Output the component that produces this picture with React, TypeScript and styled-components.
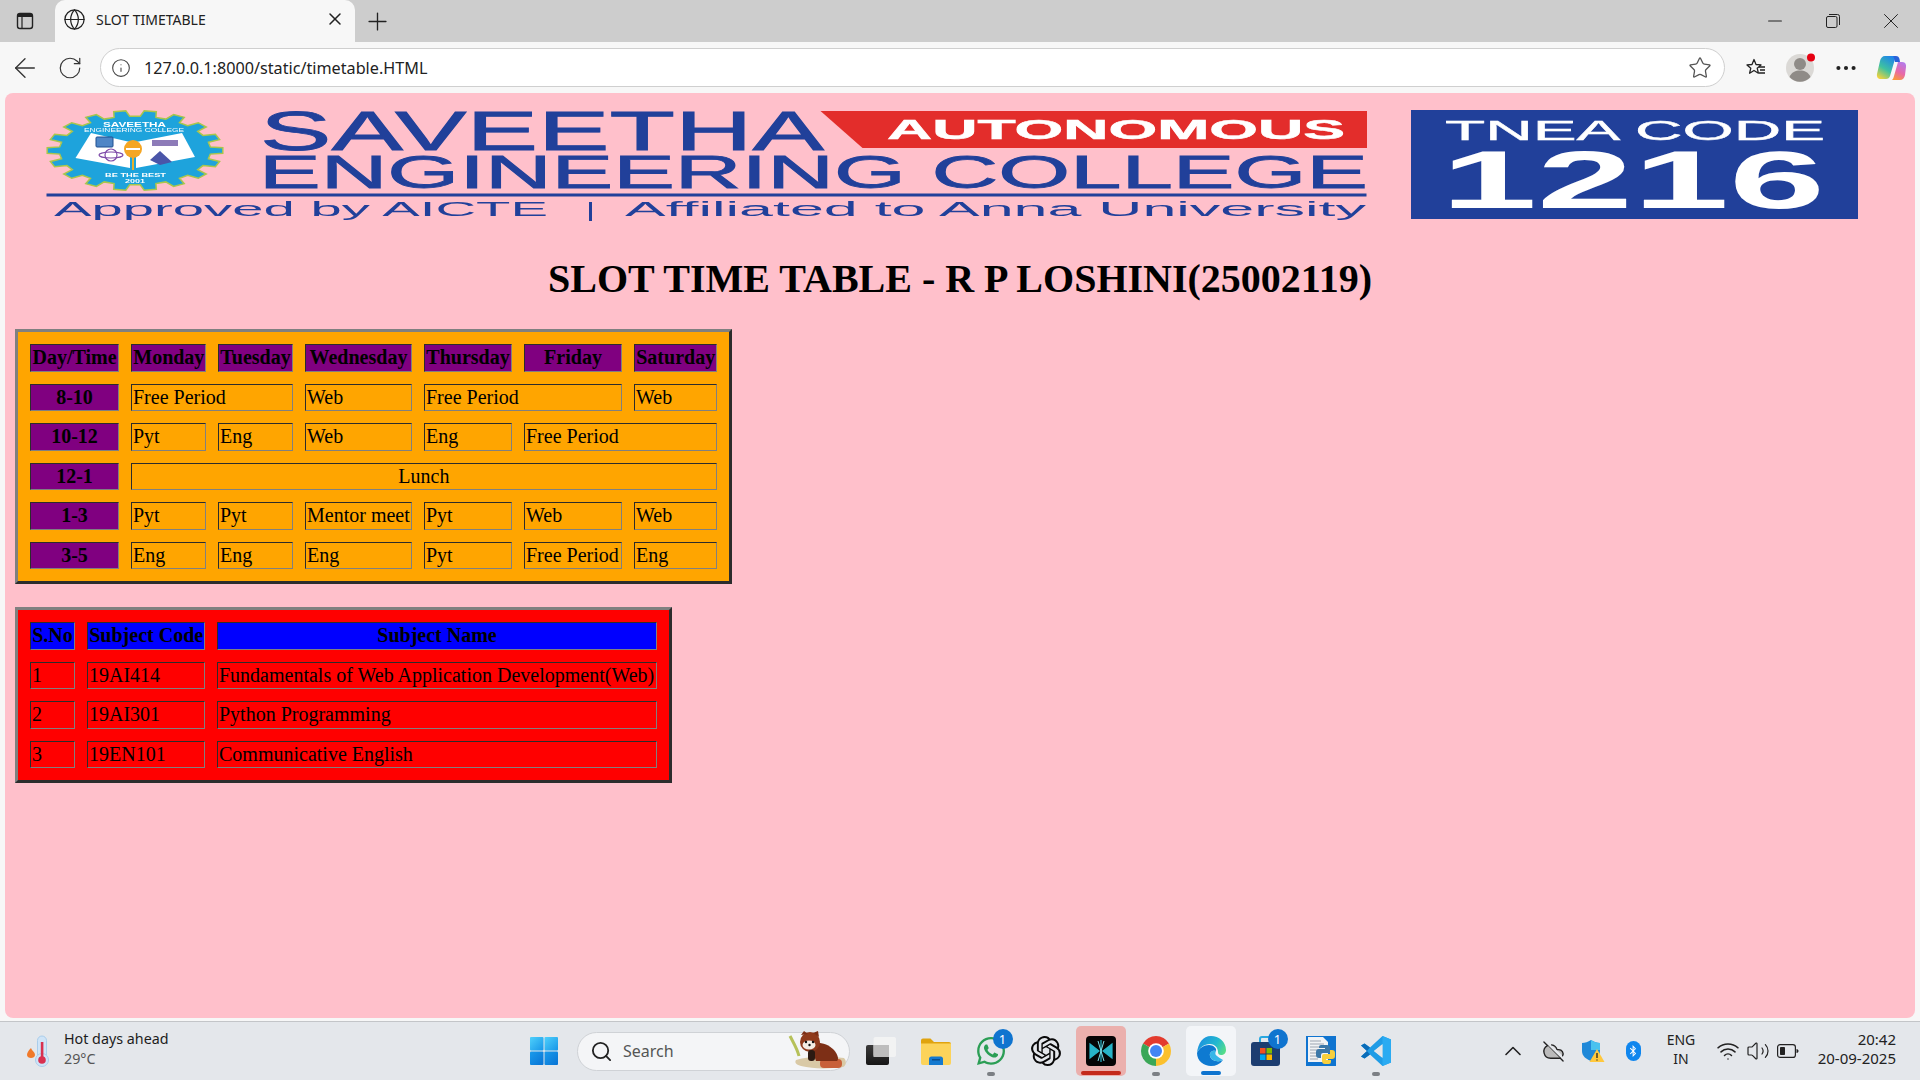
import React from 'react'
import styled, { createGlobalStyle } from 'styled-components'
import {
  ArrowLeft, ChevronUp, CloudOff, Ellipsis, Globe, Info, Minus, Plus, RotateCw, Search, Star, Volume2, Wifi, X,
} from 'lucide-react'
import { FaBluetoothB, FaWhatsapp } from 'react-icons/fa'
import { SiOpenai } from 'react-icons/si'

const UI_FONT = '"Noto Sans", "Open Sans", sans-serif'
const COLLEGE_BLUE = '#21409a'

const GlobalStyle = createGlobalStyle`
  html, body { margin: 0; padding: 0; height: 100%; overflow: hidden; }
  body { background: #f7f7f7; font-family: "Liberation Serif", serif; }
`

const week = ['Monday', 'Tuesday', 'Wednesday', 'Thursday', 'Friday', 'Saturday']

type Slot = { text: string; span?: number; center?: boolean }

const timetable: { time: string; slots: Slot[] }[] = [
  { time: '8-10', slots: [{ text: 'Free Period', span: 2 }, { text: 'Web' }, { text: 'Free Period', span: 2 }, { text: 'Web' }] },
  { time: '10-12', slots: [{ text: 'Pyt' }, { text: 'Eng' }, { text: 'Web' }, { text: 'Eng' }, { text: 'Free Period', span: 2 }] },
  { time: '12-1', slots: [{ text: 'Lunch', span: 6, center: true }] },
  { time: '1-3', slots: [{ text: 'Pyt' }, { text: 'Pyt' }, { text: 'Mentor meet' }, { text: 'Pyt' }, { text: 'Web' }, { text: 'Web' }] },
  { time: '3-5', slots: [{ text: 'Eng' }, { text: 'Eng' }, { text: 'Eng' }, { text: 'Pyt' }, { text: 'Free Period' }, { text: 'Eng' }] },
]

const subjects = [
  ['1', '19AI414', 'Fundamentals of Web Application Development(Web)'],
  ['2', '19AI301', 'Python Programming'],
  ['3', '19EN101', 'Communicative English'],
]

const gearPoints = (() => {
  const teeth = 18
  const points: string[] = []
  for (let i = 0; i < teeth; i++) {
    const step = (Math.PI * 2) / teeth
    const a = i * step
    const rows: [number, number][] = [[-0.3, 0.86], [-0.2, 1], [0.2, 1], [0.3, 0.86]]
    rows.forEach(([offset, r]) => {
      const angle = a + offset * step
      points.push(`${(135 + Math.cos(angle) * 88 * r).toFixed(1)},${(150.5 + Math.sin(angle) * 40 * r).toFixed(1)}`)
    })
  }
  return points.join(' ')
})()

const CollegeBanner = () => (
  <BannerSvg viewBox="40 104 1330 122">
    <polygon points={gearPoints} fill="#1ea3dc" stroke="#a9c64b" strokeWidth="1.5" />
    <polygon points="91,133 130,142 130,168 75.5,158" fill="#fff" />
    <polygon points="182,133 136,142 136,168 195,157" fill="#fff" />
    <rect x="96" y="137" width="17" height="10" rx="1" fill="#4f86c6" stroke="#1f4f8f" />
    <g fill="none" stroke="#7d4aa8" strokeWidth="1.2">
      <ellipse cx="111" cy="155" rx="12" ry="3" />
      <ellipse cx="111" cy="155" rx="6" ry="6" />
    </g>
    <rect x="152" y="140" width="26" height="6" fill="#8d7bb8" />
    <polygon points="150,160 160,151 172,162 160,165" fill="#4a55a8" />
    <rect x="132" y="155" width="2" height="15" fill="#e8b12c" />
    <ellipse cx="133" cy="149" rx="9" ry="9" fill="#f5a623" />
    <rect x="126" y="148" width="14" height="2" fill="#fff" />
    <BannerText x="103" y="127" textLength="63" fontSize="8" fontWeight="bold" fill="#fff">SAVEETHA</BannerText>
    <BannerText x="84" y="132" textLength="100" fontSize="5" fill="#fff">ENGINEERING COLLEGE</BannerText>
    <BannerText x="105" y="177" textLength="61" fontSize="6" fontWeight="bold" fill="#fff">BE THE BEST</BannerText>
    <BannerText x="125" y="183" textLength="20" fontSize="5" fontWeight="bold" fill="#fff">2001</BannerText>

    <BannerText x="260" y="150" textLength="564" fontSize="56" fill={COLLEGE_BLUE} stroke={COLLEGE_BLUE} strokeWidth="0.8">SAVEETHA</BannerText>
    <BannerText x="259" y="188" textLength="1109" fontSize="46" fill={COLLEGE_BLUE} stroke={COLLEGE_BLUE} strokeWidth="0.8">ENGINEERING COLLEGE</BannerText>
    <polygon points="820.5,111 1367,111 1367,148 862.5,148" fill="#e32d2b" />
    <BannerText x="887" y="139" textLength="458" fontSize="27" fontWeight="bold" fill="#fff" stroke="#fff" strokeWidth="0.5">AUTONOMOUS</BannerText>
    <rect x="46.5" y="193.5" width="1320" height="3" fill={COLLEGE_BLUE} />
    <BannerText x="54" y="216" textLength="494" fontSize="20" fill={COLLEGE_BLUE}>Approved by AICTE</BannerText>
    <rect x="589" y="202" width="3" height="19" fill={COLLEGE_BLUE} />
    <BannerText x="625" y="216" textLength="741" fontSize="20" fill={COLLEGE_BLUE}>Affiliated to Anna University</BannerText>
  </BannerSvg>
)

const TneaBadge = () => (
  <BadgeSvg viewBox="1411 110 447 109">
    <rect x="1411" y="110" width="447" height="109" fill={COLLEGE_BLUE} />
    <BannerText x="1445" y="140" textLength="380" fontSize="27" fill="#fff" stroke="#fff" strokeWidth="0.4">TNEA CODE</BannerText>
    <BannerText x="1441" y="208" textLength="384" fontSize="82" fontWeight="bold" fill="#fff">1216</BannerText>
  </BadgeSvg>
)

const PanelIcon = () => (
  <svg width="20" height="20" viewBox="0 0 20 20">
    <rect x="2.5" y="2.5" width="15" height="15" rx="2.5" fill="none" stroke="#222" strokeWidth="1.4" />
    <path d="M3 3h14v3H3z" fill="#222" />
    <path d="M7 6v11" stroke="#222" strokeWidth="1.2" />
  </svg>
)

const RestoreIcon = () => (
  <svg width="14" height="14" viewBox="0 0 14 14" fill="none" stroke="#222" strokeWidth="1">
    <rect x="0.5" y="2.5" width="10.5" height="11" rx="1.5" />
    <path d="M3 0.5h8.5a2 2 0 0 1 2 2V11" />
  </svg>
)

const FavoritesIcon = () => (
  <svg width="22" height="22" viewBox="0 0 22 22" fill="none" stroke="#222" strokeWidth="1.3">
    <path d="M9 2.5l2 5 5 .4-3.8 3.3 1.2 5-4.4-2.7L4.6 16.2l1.2-5L2 7.9l5-.4z" strokeLinejoin="round" />
    <path d="M14 10h6M15 13h5M14 16h6" />
  </svg>
)

const ProfileIcon = () => (
  <svg width="30" height="30" viewBox="0 0 30 30">
    <circle cx="14" cy="15" r="14" fill="#dbd9d6" />
    <circle cx="14" cy="11" r="6" fill="#8f8b87" />
    <path d="M3.5 24c2-5 6-6.500 10.500-6.500S22.500 19 24.500 24a14 14 0 0 1-21 0z" fill="#8f8b87" />
    <circle cx="25" cy="4.500" r="4" fill="#e60012" />
  </svg>
)

const CopilotIcon = () => (
  <svg width="30" height="28" viewBox="0 0 30 28">
    <defs>
      <linearGradient id="copilotLeft" x1="0.7" y1="0" x2="0.2" y2="1">
        <stop offset="0" stopColor="#1f86e8" />
        <stop offset="0.55" stopColor="#3fc2a0" />
        <stop offset="1" stopColor="#f3d23c" />
      </linearGradient>
      <linearGradient id="copilotRight" x1="0.7" y1="0" x2="0.3" y2="1">
        <stop offset="0" stopColor="#b57bea" />
        <stop offset="0.55" stopColor="#e868a8" />
        <stop offset="1" stopColor="#f99a3c" />
      </linearGradient>
    </defs>
    <path d="M9 2h8c2 0 2.500 1 2 3l-5 17c-.5 2-2 3-4 3H5c-3 0-4.500-2-4-5l3-13c.5-3 2.500-5 5-5z" fill="url(#copilotLeft)" />
    <path d="M16 26h8c2.500 0 4.500-2 5-5l1-8c.4-3-1-5-4-5h-4l-4 14c-.5 2-1 3-2 4z" fill="url(#copilotRight)" />
    <path d="M17 2h3c2 0 3 1 3.500 3l.5 3h-5l-1-4z" fill="#2a62d8" />
  </svg>
)

const Thermometer = () => (
  <svg width="26" height="34" viewBox="0 0 26 34">
    <path d="M6 14c-3 3-4 5-4 7 0 2 2 3 4 3s4-1 4-3c0-3-3-4-4-7z" fill="#f0792a" />
    <rect x="12.500" y="2" width="9" height="24" rx="4.500" fill="#cfe4f7" stroke="#a9cdeb" />
    <circle cx="17" cy="26" r="6.500" fill="#cfe4f7" stroke="#a9cdeb" />
    <rect x="15.800" y="8" width="2.600" height="18" fill="#d9304f" />
    <circle cx="17" cy="26" r="3.800" fill="#d9304f" />
  </svg>
)

const WindowsLogo = () => (
  <svg width="28" height="28" viewBox="0 0 28 28">
    <defs>
      <linearGradient id="winTop" x1="0" y1="0" x2="1" y2="1">
        <stop offset="0" stopColor="#4fd0fb" />
        <stop offset="1" stopColor="#1796e8" />
      </linearGradient>
      <linearGradient id="winBottom" x1="0" y1="0" x2="1" y2="1">
        <stop offset="0" stopColor="#1a9cec" />
        <stop offset="1" stopColor="#0873d4" />
      </linearGradient>
    </defs>
    <rect width="13.500" height="13.500" rx="1" fill="url(#winTop)" />
    <rect x="14.500" width="13.500" height="13.500" rx="1" fill="url(#winTop)" />
    <rect y="14.500" width="13.500" height="13.500" rx="1" fill="url(#winBottom)" />
    <rect x="14.500" y="14.500" width="13.500" height="13.500" rx="1" fill="url(#winBottom)" />
  </svg>
)

const RedPanda = () => (
  <svg width="60" height="40" viewBox="0 0 60 40">
    <path d="M2 6c3 6 7 12 9 20" stroke="#b6c15a" strokeWidth="3" fill="none" />
    <path d="M8 30c12-4 32-4 48-2 3 3 2 8-1 9-14 2-30 2-42-1-4-1-7-3-5-6z" fill="#d9c9a6" />
    <rect x="32" y="29" width="22" height="9" rx="4" fill="#c8603a" />
    <path d="M22 14c6-3 18-1 24 6 4 5 5 9 3 11H28z" fill="#7d2f16" />
    <circle cx="22" cy="12" r="10" fill="#8f3a1c" />
    <path d="M13 5l3-4 4 3zM25 3l5-2 1 6z" fill="#7d2f16" />
    <ellipse cx="21" cy="15" rx="6.500" ry="4.500" fill="#f3ece3" />
    <circle cx="18" cy="12" r="1.200" fill="#111" />
    <circle cx="25" cy="12" r="1.200" fill="#111" />
    <circle cx="21.500" cy="15" r="1.200" fill="#111" />
    <rect x="20" y="20" width="7" height="11" rx="3" fill="#2c1a12" />
  </svg>
)

const TaskViewIcon = () => (
  <svg width="30" height="28" viewBox="0 0 30 28">
    <defs>
      <linearGradient id="taskFront" x1="0" y1="0" x2="0" y2="1">
        <stop offset="0" stopColor="#3a3a3a" />
        <stop offset="1" stopColor="#161616" />
      </linearGradient>
    </defs>
    <rect y="8" width="23" height="20" rx="2" fill="url(#taskFront)" />
    <rect x="7.500" y="0" width="22.500" height="20" rx="2" fill="#f4f4f4" opacity="0.85" />
    <rect x="7.500" y="8" width="15.500" height="12" fill="#bdbdbd" />
  </svg>
)

const FolderIcon = () => (
  <svg width="30" height="27" viewBox="0 0 30 27">
    <path d="M0 2.500A2 2 0 0 1 2 .5h7.500L13 4h15a2 2 0 0 1 2 2v4H0z" fill="#e0a30e" />
    <path d="M0 5.500h30V25a2 2 0 0 1-2 2H2a2 2 0 0 1-2-2z" fill="#fcd35a" />
    <path d="M8 27v-6a2.500 2.500 0 0 1 2.500-2.500h9A2.500 2.500 0 0 1 22 21v6z" fill="#1479cf" />
    <rect x="11" y="21" width="8" height="1.500" fill="#0a4d8c" />
  </svg>
)

const AppIcon = () => (
  <svg width="30" height="30" viewBox="0 0 30 30">
    <rect width="30" height="30" rx="4" fill="#050505" />
    <path d="M15 4v22M4 8l9 7-9 7zM26 8l-9 7 9 7z" fill="#27b3c7" stroke="#27b3c7" strokeWidth="1.200" />
    <path d="M12 5l3 10-3 10M18 5l-3 10 3 10" fill="none" stroke="#7fe0ea" strokeWidth="1" />
  </svg>
)

const ChromeIcon = () => (
  <svg width="30" height="30" viewBox="0 0 30 30">
    <path d="M15 15L2.010 7.500A15 15 0 0 1 27.990 7.500z" fill="#e33b2e" />
    <path d="M15 15h15A15 15 0 0 1 15 30z" fill="#fbc02d" />
    <path d="M15 15L27.990 7.500A15 15 0 0 1 30 15z" fill="#fbc02d" />
    <path d="M15 15v15A15 15 0 0 1 2.010 7.500z" fill="#3aa757" />
    <circle cx="15" cy="15" r="7.800" fill="#fff" />
    <circle cx="15" cy="15" r="6" fill="#4285f4" />
  </svg>
)

const EdgeIcon = () => (
  <svg width="30" height="30" viewBox="0 0 30 30">
    <defs>
      <linearGradient id="edgeOuter" x1="0" y1="0.3" x2="1" y2="0.7">
        <stop offset="0" stopColor="#1b8fe0" />
        <stop offset="0.6" stopColor="#22b8cf" />
        <stop offset="1" stopColor="#55dd88" />
      </linearGradient>
    </defs>
    <path d="M15 0c8 0 15 6 15 14 0 3-2 5-5 5-2 0-3-1-3-3 0-5-4-8-8-8-6 0-11 4-13 9C2 7 7 0 15 0z" fill="url(#edgeOuter)" />
    <path d="M1 17C3 12 8 9 13 9c4 0 8 3 7 6-3-1-7 1-6 5 1 4 6 7 13 4-3 4-7 6-12 6C8 30 1 25 1 17z" fill="#0e7ad1" />
    <path d="M14 20c-1-4 3-6 6-5-1 2-1 4 1 5 1 1 3 2 6 4-7 3-12 0-13-4z" fill="#36b6e8" />
  </svg>
)

const StoreIcon = () => (
  <svg width="30" height="30" viewBox="0 0 30 30">
    <path d="M9 6V3a2 2 0 0 1 2-2h8a2 2 0 0 1 2 2v3" fill="none" stroke="#29a8e0" strokeWidth="2" />
    <rect y="6" width="29" height="24" rx="3" fill="#1c3d70" />
    <rect x="9" y="12" width="5.500" height="5.500" fill="#f25022" />
    <rect x="15.500" y="12" width="5.500" height="5.500" fill="#7fba00" />
    <rect x="9" y="18.500" width="5.500" height="5.500" fill="#00a4ef" />
    <rect x="15.500" y="18.500" width="5.500" height="5.500" fill="#ffb900" />
  </svg>
)

const PythonFileIcon = () => (
  <svg width="30" height="30" viewBox="0 0 30 30">
    <rect width="30" height="30" fill="#0f74d0" />
    <path d="M2 1h15l5 5v20H2z" fill="#f1f3f5" />
    <path d="M4 5h11M4 8h14M4 11h14M4 14h12M4 17h9M4 20h9M4 23h8" stroke="#b9c0c7" strokeWidth="1.300" />
    <path d="M15 9h6a3 3 0 0 1 3 3v5h-7a2 2 0 0 0-2 2v3h-2a3 3 0 0 1-3-3v-3a3 3 0 0 1 3-3h6v-1h-6v-1a2 2 0 0 1 2-2z" fill="#3b77a8" />
    <path d="M24 14h2a3 3 0 0 1 3 3v3a3 3 0 0 1-3 3h-6v1h5v2a2 2 0 0 1-2 2h-4a3 3 0 0 1-3-3v-5a2 2 0 0 1 2-2h6z" fill="#f7cf3d" />
  </svg>
)

const VsCodeIcon = () => (
  <svg width="30" height="30" viewBox="0 0 30 30">
    <path d="M21.500 0L30 3.500v23L21.500 30 9 18.500l-5.500 4L0 20.500 6 15 0 9.500 3.500 7.500l5.500 4z" fill="#1f9ce6" />
    <path d="M21.500 8.500v13L13 15z" fill="#e3e6ea" />
    <path d="M21.500 0L30 3.500v23L21.500 30z" fill="#2aabf2" />
    <path d="M21.500 8L13 15l8.500 7z" fill="#e3e6ea" />
    <path d="M3.500 7.500L0 9.500 6 15 0 20.500l3.500 2L9 18.500l-3-3.500 3-3.500z" fill="#0a6cb8" />
  </svg>
)

const ShieldIcon = () => (
  <svg width="24" height="24" viewBox="0 0 24 24">
    <path d="M10 1c3 2 6 3 9 3v8c0 5-4 8-9 10C5 20 1 17 1 12V4c3 0 6-1 9-3z" fill="#1e88d8" />
    <path d="M10 1c3 2 6 3 9 3v7H10z" fill="#48c2ef" />
    <path d="M16 10l7.500 13h-15z" fill="#ffc83d" />
    <path d="M16 14v5M16 20.500v1" stroke="#222" strokeWidth="1.300" />
  </svg>
)

const BatteryIcon = () => (
  <svg width="22" height="14" viewBox="0 0 22 14">
    <rect x="0.600" y="0.600" width="17.800" height="12.800" rx="2.500" fill="none" stroke="#222" strokeWidth="1.200" />
    <rect x="3" y="3" width="5" height="8" rx="0.800" fill="#222" />
    <path d="M19.500 5v4c1.200 0 2-1 2-2s-.8-2-2-2z" fill="#222" />
  </svg>
)

const dockApps: { key: string; icon: React.ReactNode; badge?: string; state?: 'hot' | 'active'; dot?: boolean }[] = [
  { key: 'task', icon: <TaskViewIcon /> },
  { key: 'files', icon: <FolderIcon /> },
  { key: 'whatsapp', icon: <FaWhatsapp size={32} color="#2b9e55" />, badge: '1', dot: true },
  { key: 'gpt', icon: <SiOpenai size={30} color="#0a0a0a" /> },
  { key: 'app', icon: <AppIcon />, state: 'hot' },
  { key: 'chrome', icon: <ChromeIcon />, dot: true },
  { key: 'edge', icon: <EdgeIcon />, state: 'active' },
  { key: 'store', icon: <StoreIcon />, badge: '1' },
  { key: 'python', icon: <PythonFileIcon /> },
  { key: 'code', icon: <VsCodeIcon />, dot: true },
]

export default function App() {
  return (
    <Shell>
      <GlobalStyle />
      <TabStrip>
        <PanelButton><PanelIcon /></PanelButton>
        <Tab>
          <Globe size={23} color="#222" strokeWidth={1.3} />
          <TabTitle>SLOT TIMETABLE</TabTitle>
          <X size={20} color="#222" strokeWidth={1.8} />
        </Tab>
        <NewTab><Plus size={29} color="#222" strokeWidth={1.1} /></NewTab>
        <WindowControls>
          <WindowButton><Minus size={22} color="#222" strokeWidth={1.1} /></WindowButton>
          <WindowButton><RestoreIcon /></WindowButton>
          <WindowButton><X size={26} color="#222" strokeWidth={0.9} /></WindowButton>
        </WindowControls>
      </TabStrip>

      <Toolbar>
        <ToolButton><ArrowLeft size={32} color="#333" strokeWidth={1} /></ToolButton>
        <ToolButton><RotateCw size={26} color="#333" strokeWidth={1.1} /></ToolButton>
        <AddressBar>
          <Info size={20} color="#444" strokeWidth={1.3} />
          <Url>127.0.0.1:8000/static/timetable.HTML</Url>
          <Star size={24} color="#555" strokeWidth={1.3} />
        </AddressBar>
        <ToolActions>
          <FavoritesIcon />
          <ProfileIcon />
          <Ellipsis size={26} color="#222" strokeWidth={1.8} />
          <CopilotIcon />
        </ToolActions>
      </Toolbar>

      <Page>
        <Banner>
          <CollegeBanner />
          <TneaBadge />
        </Banner>
        <Heading>SLOT TIME TABLE - R P LOSHINI(25002119)</Heading>

        <TableStack>
          <GridTable $bg="orange">
            <colgroup>
              {[89, 75, 75, 107, 88, 98, 83].map((w, i) => <col key={i} width={w} />)}
            </colgroup>
            <tbody>
              <tr>
                <HeadCell $bg="purple">Day/Time</HeadCell>
                {week.map(day => <HeadCell key={day} $bg="purple">{day}</HeadCell>)}
              </tr>
              {timetable.map(row => (
                <tr key={row.time}>
                  <HeadCell $bg="purple">{row.time}</HeadCell>
                  {row.slots.map((slot, i) => (
                    <Cell key={i} colSpan={slot.span} $center={slot.center}>{slot.text}</Cell>
                  ))}
                </tr>
              ))}
            </tbody>
          </GridTable>

          <GridTable $bg="red">
            <colgroup>
              {[45, 118, 440].map((w, i) => <col key={i} width={w} />)}
            </colgroup>
            <tbody>
              <tr>
                <HeadCell $bg="blue">S.No</HeadCell>
                <HeadCell $bg="blue">Subject Code</HeadCell>
                <HeadCell $bg="blue">Subject Name</HeadCell>
              </tr>
              {subjects.map(row => (
                <tr key={row[0]}>
                  {row.map(value => <Cell key={value}>{value}</Cell>)}
                </tr>
              ))}
            </tbody>
          </GridTable>
        </TableStack>
      </Page>

      <Taskbar>
        <Weather>
          <Thermometer />
          <WeatherText>
            <WeatherTitle>Hot days ahead</WeatherTitle>
            <WeatherTemp>29°C</WeatherTemp>
          </WeatherText>
        </Weather>
        <StartButton><WindowsLogo /></StartButton>
        <SearchBox>
          <Search size={23} color="#222" strokeWidth={1.9} />
          <SearchLabel>Search</SearchLabel>
          <PandaSpot><RedPanda /></PandaSpot>
        </SearchBox>
        <Dock>
          {dockApps.map(app => (
            <DockSlot key={app.key}>
              <DockTile $state={app.state}>
                {app.icon}
                {app.badge && <CountBadge>{app.badge}</CountBadge>}
                {app.state && <RunBar $state={app.state} />}
                {app.dot && <RunDot />}
              </DockTile>
            </DockSlot>
          ))}
        </Dock>
        <Tray>
          <TraySlot $w={40}><ChevronUp size={28} color="#222" strokeWidth={1.4} /></TraySlot>
          <TraySlot $w={40}><CloudOff size={23} color="#222" fill="#bbb" strokeWidth={1.4} /></TraySlot>
          <TraySlot $w={40}><ShieldIcon /></TraySlot>
          <TraySlot $w={40}><BluetoothPill><FaBluetoothB size={12} color="#fff" /></BluetoothPill></TraySlot>
          <Language>ENG<br />IN</Language>
          <TraySlot $w={30}><Wifi size={24} color="#222" strokeWidth={1.5} /></TraySlot>
          <TraySlot $w={30}><Volume2 size={24} color="#222" strokeWidth={1.2} /></TraySlot>
          <TraySlot $w={30}><BatteryIcon /></TraySlot>
          <Clock>20:42<br />20-09-2025</Clock>
        </Tray>
      </Taskbar>
    </Shell>
  )
}

const Shell = styled.div`
  width: 1920px;
  height: 1080px;
  display: flex;
  flex-direction: column;
  background: #f7f7f7;
  overflow: hidden;
`

const TabStrip = styled.div`
  height: 42px;
  flex: none;
  display: flex;
  align-items: flex-end;
  background: #cdcdcd;
`

const PanelButton = styled.div`
  width: 50px;
  height: 42px;
  margin-left: 5px;
  padding-right: 10px;
  box-sizing: border-box;
  display: flex;
  align-items: center;
  justify-content: center;
`

const Tab = styled.div`
  width: 300px;
  height: 42px;
  box-sizing: border-box;
  padding: 0 10px 4px 8px;
  display: flex;
  align-items: center;
  background: #f7f7f7;
  border-radius: 10px 10px 0 0;
`

const TabTitle = styled.span`
  flex: 1;
  margin-left: 10px;
  font: 14px ${UI_FONT};
  color: #222;
  white-space: nowrap;
`

const NewTab = styled.div`
  width: 44px;
  height: 42px;
  display: flex;
  align-items: center;
  justify-content: center;
`

const WindowControls = styled.div`
  margin-left: auto;
  height: 42px;
  display: flex;
`

const WindowButton = styled.div`
  width: 58px;
  display: flex;
  align-items: center;
  justify-content: center;
`

const Toolbar = styled.div`
  height: 51px;
  flex: none;
  display: flex;
  align-items: center;
  padding-left: 2px;
  background: #f7f7f7;
`

const ToolButton = styled.div`
  width: 45px;
  height: 39px;
  display: flex;
  align-items: center;
  justify-content: center;
`

const AddressBar = styled.div`
  width: 1625px;
  height: 39px;
  margin-left: 8px;
  box-sizing: border-box;
  padding: 0 12px 0 10px;
  display: flex;
  align-items: center;
  background: #fff;
  border: 1px solid #cfcfcf;
  border-radius: 20px;
`

const Url = styled.span`
  flex: 1;
  margin-left: 13px;
  font: 16.2px ${UI_FONT};
  color: #222;
`

const ToolActions = styled.div`
  flex: 1;
  display: grid;
  grid-template-columns: 45px 45px 45px 46px;
  align-items: center;
  justify-items: center;
  padding-left: 8px;
`

const Page = styled.main`
  flex: 1;
  margin: 0 5px 3px;
  padding: 11px 10px 0;
  background: #ffc0cb;
  border-radius: 8px;
`

const Banner = styled.header`
  display: flex;
  align-items: center;
  padding-left: 25px;
`

const BannerSvg = styled.svg`
  width: 1330px;
  height: 122px;
  flex: none;
  filter: blur(0.4px);
`

const BadgeSvg = styled.svg`
  width: 447px;
  height: 109px;
  flex: none;
  margin: 0 0 2px 41px;
  filter: blur(0.3px);
`

const BannerText = styled.text.attrs({ lengthAdjust: 'spacingAndGlyphs' })`
  font-family: "Liberation Sans", Arial, sans-serif;
  white-space: pre;
`

const Heading = styled.h1`
  margin: 30px 0 27px;
  font-size: 40px;
  line-height: 46px;
  font-weight: bold;
  text-align: center;
  color: #000;
`

const TableStack = styled.div`
  display: flex;
  flex-direction: column;
  align-items: flex-start;
  gap: 23px;
`

const GridTable = styled.table<{ $bg: string }>`
  table-layout: fixed;
  border-collapse: separate;
  border-spacing: 12px;
  border: 3px outset gray;
  background: ${({ $bg }) => $bg};
  font-size: 20px;
  line-height: 23px;
  color: #000;
  width: 1px;
`

const HeadCell = styled.th<{ $bg: string }>`
  padding: 1.25px;
  border: 1px inset gray;
  background: ${({ $bg }) => $bg};
  font-weight: bold;
  text-align: center;
  white-space: nowrap;
`

const Cell = styled.td<{ $center?: boolean }>`
  padding: 1.25px 1.25px 1.25px 1px;
  border: 1px inset gray;
  text-align: ${({ $center }) => ($center ? 'center' : 'left')};
  white-space: nowrap;
`

const Taskbar = styled.footer`
  height: 59px;
  flex: none;
  box-sizing: border-box;
  display: flex;
  align-items: center;
  background: #e4e7eb;
  border-top: 1px solid #c3c5c8;
`

const Weather = styled.div`
  width: 516px;
  flex: none;
  box-sizing: border-box;
  padding-left: 25px;
  display: flex;
  align-items: center;
  gap: 13px;
`

const WeatherText = styled.div`
  display: flex;
  flex-direction: column;
  gap: 1px;
  margin-top: -5px;
`

const WeatherTitle = styled.span`
  font: 14.3px/19px ${UI_FONT};
  color: #1c1c1c;
`

const WeatherTemp = styled.span`
  font: 14.3px/19px ${UI_FONT};
  color: #555;
`

const StartButton = styled.div`
  width: 56px;
  flex: none;
  display: flex;
  justify-content: center;
`

const SearchBox = styled.div`
  width: 273px;
  height: 39px;
  flex: none;
  margin-left: 5px;
  box-sizing: border-box;
  padding-left: 12px;
  position: relative;
  display: flex;
  align-items: center;
  gap: 10px;
  background: #f4f5f7;
  border: 1px solid #cfd2d6;
  border-radius: 20px;
`

const SearchLabel = styled.span`
  font: 16px ${UI_FONT};
  color: #555;
`

const PandaSpot = styled.div`
  position: absolute;
  right: 1px;
  top: -3px;
`

const Dock = styled.div`
  display: flex;
  margin-left: 3px;
`

const DockSlot = styled.div`
  width: 55px;
  height: 50px;
  display: flex;
  justify-content: center;
`

const DockTile = styled.div<{ $state?: 'hot' | 'active' }>`
  position: relative;
  width: 50px;
  height: 50px;
  display: flex;
  align-items: center;
  justify-content: center;
  border-radius: 5px;
  background: ${({ $state }) => ($state === 'hot' ? '#ebb0ad' : $state === 'active' ? '#f3f5f8' : 'transparent')};
`

const CountBadge = styled.span`
  position: absolute;
  top: 3px;
  right: 3px;
  width: 20px;
  height: 20px;
  display: flex;
  align-items: center;
  justify-content: center;
  border-radius: 50%;
  background: #0f74cf;
  color: #fff;
  font: 13px ${UI_FONT};
`

const RunBar = styled.span<{ $state: 'hot' | 'active' }>`
  position: absolute;
  bottom: 1px;
  left: 50%;
  transform: translateX(-50%);
  width: ${({ $state }) => ($state === 'hot' ? 40 : 20)}px;
  height: 4px;
  border-radius: 2px;
  background: ${({ $state }) => ($state === 'hot' ? '#c42b1c' : '#0f74cf')};
`

const RunDot = styled.span`
  position: absolute;
  bottom: 0;
  left: 50%;
  transform: translateX(-50%);
  width: 8px;
  height: 4px;
  border-radius: 2px;
  background: #7b7f84;
`

const Tray = styled.div`
  margin-left: auto;
  display: flex;
  align-items: center;
  padding-right: 24px;
`

const TraySlot = styled.div<{ $w: number }>`
  width: ${({ $w }) => $w}px;
  display: flex;
  align-items: center;
  justify-content: center;
`

const BluetoothPill = styled.span`
  width: 15px;
  height: 20px;
  display: flex;
  align-items: center;
  justify-content: center;
  border-radius: 8px;
  background: #0f86ee;
`

const Language = styled.div`
  width: 56px;
  margin-right: 4px;
  margin-top: -4px;
  text-align: center;
  font: 14px/19px ${UI_FONT};
  color: #222;
`

const Clock = styled.div`
  width: 93px;
  margin-top: -4px;
  text-align: right;
  font: 15px/19px ${UI_FONT};
  color: #222;
`
